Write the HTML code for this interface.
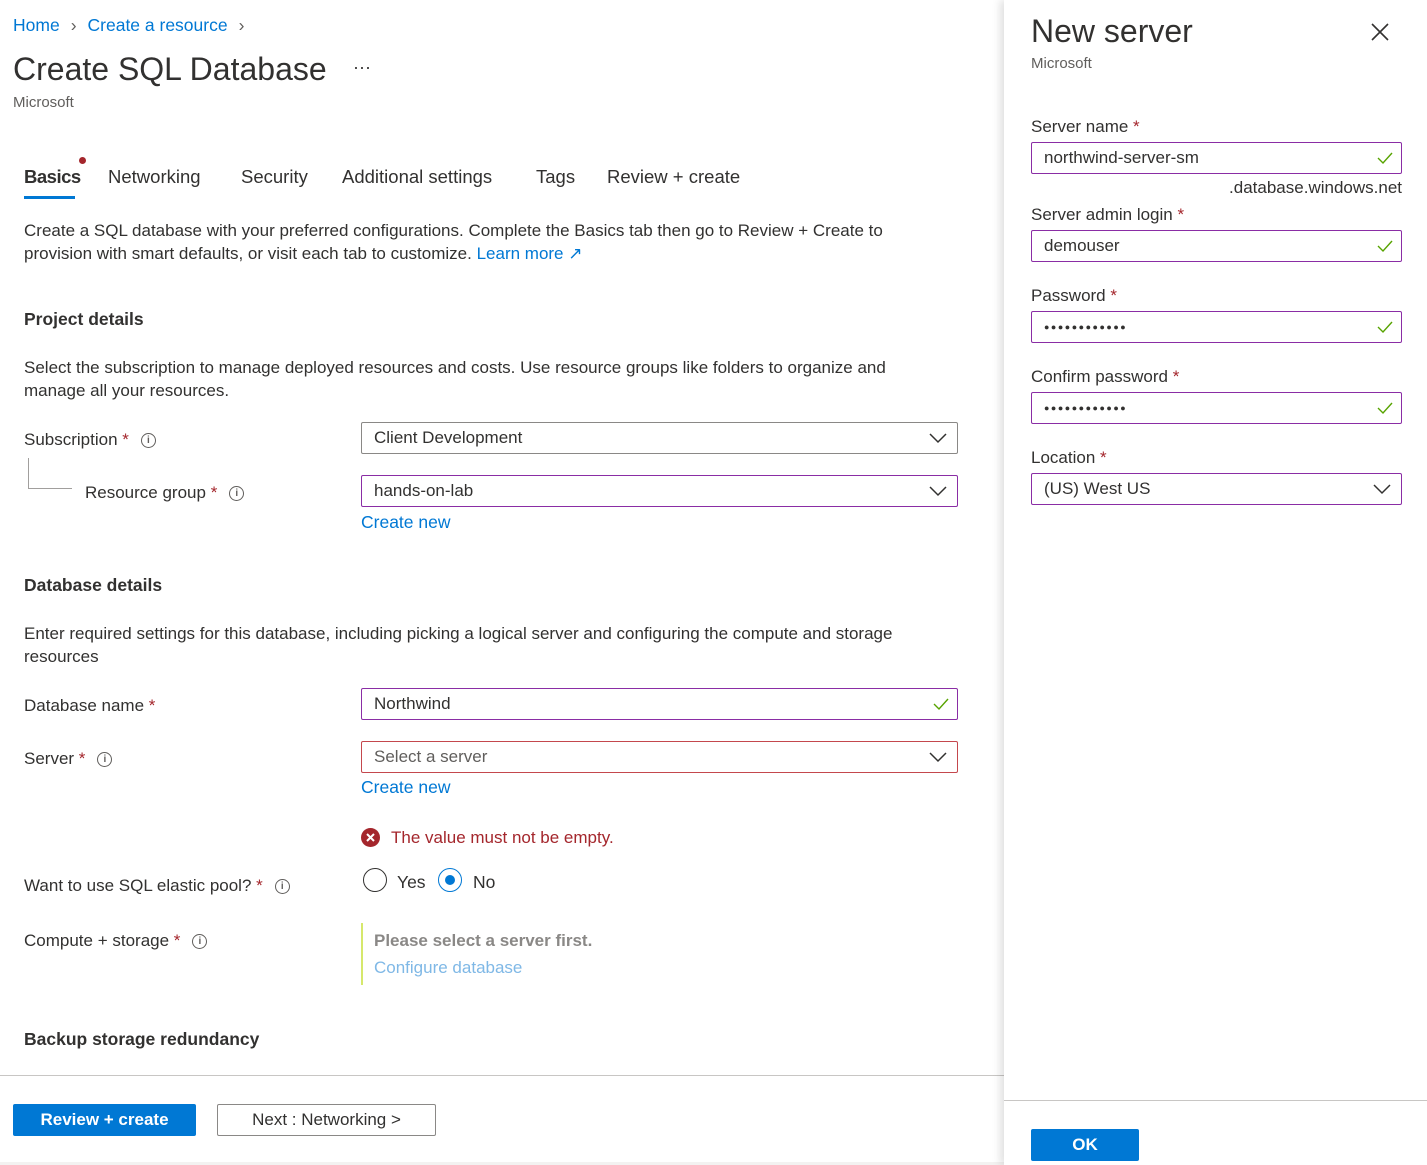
<!DOCTYPE html>
<html><head><meta charset="utf-8"><style>
*{box-sizing:border-box;margin:0;padding:0}
body{width:1427px;height:1165px;position:relative;overflow:hidden;background:#fff;font-family:"Liberation Sans",sans-serif;color:#323130;font-size:17px}
.a{position:absolute;white-space:nowrap}
.link{color:#0078d4}
.req{color:#a4262c}
.box{position:absolute;height:32px;border:1px solid #8a8886;border-radius:2px;padding:0 12px;line-height:30px;font-size:17px}
.pur{border-color:#8a2da5}
.chk{position:absolute;right:8px;top:8px}
.chev{position:absolute;right:10px;top:9px}
.info{display:inline-block;width:15px;height:15px;border:1px solid #605e5c;border-radius:50%;font-size:10px;line-height:13px;text-align:center;color:#605e5c;vertical-align:middle;margin-left:12px;font-weight:bold}
h3{font-size:17.5px;font-weight:bold;position:absolute;color:#323130}
.pw{font-size:9px;letter-spacing:1.5px}
</style></head><body>

<div class="a" style="left:13px;top:15px;font-size:17.5px"><span class="link">Home</span><span style="color:#605e5c;margin:0 11px">&#8250;</span><span class="link">Create a resource</span><span style="color:#605e5c;margin:0 11px">&#8250;</span></div>
<div class="a" style="left:13px;top:51px;font-size:32px;color:#323130">Create SQL Database</div>
<div class="a" style="left:353px;top:57px;font-size:18px">&middot;&middot;&middot;</div>
<div class="a" style="left:13px;top:94px;font-size:15px;color:#605e5c">Microsoft</div>

<div class="a" style="left:24px;top:166px;font-size:18.5px;font-weight:bold;letter-spacing:-0.5px">Basics</div>
<div class="a" style="left:79px;top:157px;width:7px;height:7px;border-radius:50%;background:#a4262c"></div>
<div class="a" style="left:24px;top:196px;width:51px;height:3px;background:#0078d4"></div>
<div class="a" style="left:108px;top:166px;font-size:18.5px">Networking</div>
<div class="a" style="left:241px;top:166px;font-size:18.5px">Security</div>
<div class="a" style="left:342px;top:166px;font-size:18.5px">Additional settings</div>
<div class="a" style="left:536px;top:166px;font-size:18.5px">Tags</div>
<div class="a" style="left:607px;top:166px;font-size:18.5px">Review + create</div>

<div class="a" style="left:24px;top:219px;line-height:23px;font-size:17px">Create a SQL database with your preferred configurations. Complete the Basics tab then go to Review + Create to<br>provision with smart defaults, or visit each tab to customize. <span class="link">Learn more &#8599;</span></div>

<h3 style="left:24px;top:309px">Project details</h3>
<div class="a" style="left:24px;top:356px;line-height:23px;font-size:17px">Select the subscription to manage deployed resources and costs. Use resource groups like folders to organize and<br>manage all your resources.</div>

<div class="a" style="left:24px;top:430px">Subscription <span class="req">*</span><span class="info">i</span></div>
<div class="a" style="left:28px;top:458px;width:44px;height:31px;border-left:1px solid #a19f9d;border-bottom:1px solid #a19f9d"></div>
<div class="a" style="left:85px;top:483px">Resource group <span class="req">*</span><span class="info">i</span></div>
<div class="box" style="left:361px;top:422px;width:597px">Client Development<svg class="chev" width="18" height="12" viewBox="0 0 18 12"><path d="M1 2l8 8 8-8" fill="none" stroke="#323130" stroke-width="1.5"/></svg></div>
<div class="box pur" style="left:361px;top:475px;width:597px">hands-on-lab<svg class="chev" width="18" height="12" viewBox="0 0 18 12"><path d="M1 2l8 8 8-8" fill="none" stroke="#323130" stroke-width="1.5"/></svg></div>
<div class="a link" style="left:361px;top:512px;font-size:17.5px">Create new</div>

<h3 style="left:24px;top:575px">Database details</h3>
<div class="a" style="left:24px;top:622px;line-height:23px;font-size:17px">Enter required settings for this database, including picking a logical server and configuring the compute and storage<br>resources</div>

<div class="a" style="left:24px;top:696px">Database name <span class="req">*</span></div>
<div class="box pur" style="left:361px;top:688px;width:597px">Northwind<svg class="chk" width="16" height="14" viewBox="0 0 16 14"><path d="M1 7l5 5 9-10" fill="none" stroke="#57a300" stroke-width="1.4"/></svg></div>
<div class="a" style="left:24px;top:749px">Server <span class="req">*</span><span class="info">i</span></div>
<div class="box" style="left:361px;top:741px;width:597px;border-color:#c4474d;color:#605e5c">Select a server<svg class="chev" width="18" height="12" viewBox="0 0 18 12"><path d="M1 2l8 8 8-8" fill="none" stroke="#323130" stroke-width="1.5"/></svg></div>
<div class="a link" style="left:361px;top:777px;font-size:17.5px">Create new</div>

<svg class="a" style="left:361px;top:828px" width="19" height="19" viewBox="0 0 19 19"><circle cx="9.5" cy="9.5" r="9.5" fill="#a4262c"/><path d="M6 6l7 7M13 6l-7 7" stroke="#fff" stroke-width="2"/></svg>
<div class="a" style="left:391px;top:828px;color:#a4262c;font-size:17px">The value must not be empty.</div>

<div class="a" style="left:24px;top:876px">Want to use SQL elastic pool? <span class="req">*</span><span class="info">i</span></div>
<div class="a" style="left:363px;top:868px;width:24px;height:24px;border:1.5px solid #323130;border-radius:50%"></div>
<div class="a" style="left:397px;top:872px;font-size:17.5px">Yes</div>
<div class="a" style="left:438px;top:868px;width:24px;height:24px;border:1.5px solid #0078d4;border-radius:50%"></div>
<div class="a" style="left:445px;top:875px;width:10px;height:10px;background:#0078d4;border-radius:50%"></div>
<div class="a" style="left:473px;top:872px;font-size:17.5px">No</div>

<div class="a" style="left:24px;top:931px">Compute + storage <span class="req">*</span><span class="info">i</span></div>
<div class="a" style="left:361px;top:923px;width:2px;height:62px;background:#bad80a;opacity:.6"></div>
<div class="a" style="left:374px;top:931px;font-weight:bold;color:#8a8886;font-size:17px">Please select a server first.</div>
<div class="a" style="left:374px;top:958px;color:#7fb8e6;font-size:17px">Configure database</div>

<h3 style="left:24px;top:1029px">Backup storage redundancy</h3>

<div class="a" style="left:0;top:1075px;width:1004px;height:1px;background:#c8c6c4"></div>
<div class="a" style="left:13px;top:1104px;width:183px;height:32px;background:#0078d4;border-radius:2px;color:#fff;font-weight:bold;text-align:center;line-height:32px;font-size:17px">Review + create</div>
<div class="a" style="left:217px;top:1104px;width:219px;height:32px;border:1px solid #8a8886;border-radius:2px;text-align:center;line-height:30px;font-size:17px">Next : Networking &gt;</div>
<div class="a" style="left:0;top:1162px;width:1004px;height:3px;background:#f3f2f1"></div>

<!-- panel -->
<div class="a" style="left:1004px;top:0;width:423px;height:1165px;background:#fff;box-shadow:-4px 0 8px rgba(0,0,0,.12)"></div>
<div class="a" style="left:1031px;top:13px;font-size:32px">New server</div>
<svg class="a" style="left:1371px;top:23px" width="18" height="18" viewBox="0 0 18 18"><path d="M1 1l16 16M17 1L1 17" stroke="#323130" stroke-width="1.6"/></svg>
<div class="a" style="left:1031px;top:55px;font-size:15px;color:#605e5c">Microsoft</div>

<div class="a" style="left:1031px;top:117px">Server name <span class="req">*</span></div>
<div class="box pur" style="left:1031px;top:142px;width:371px">northwind-server-sm<svg class="chk" width="16" height="14" viewBox="0 0 16 14"><path d="M1 7l5 5 9-10" fill="none" stroke="#57a300" stroke-width="1.4"/></svg></div>
<div class="a" style="right:25px;top:178px">.database.windows.net</div>
<div class="a" style="left:1031px;top:205px">Server admin login <span class="req">*</span></div>
<div class="box pur" style="left:1031px;top:230px;width:371px">demouser<svg class="chk" width="16" height="14" viewBox="0 0 16 14"><path d="M1 7l5 5 9-10" fill="none" stroke="#57a300" stroke-width="1.4"/></svg></div>
<div class="a" style="left:1031px;top:286px">Password <span class="req">*</span></div>
<div class="box pur pw" style="left:1031px;top:311px;width:371px">&#9679;&#9679;&#9679;&#9679;&#9679;&#9679;&#9679;&#9679;&#9679;&#9679;&#9679;&#9679;<svg class="chk" width="16" height="14" viewBox="0 0 16 14"><path d="M1 7l5 5 9-10" fill="none" stroke="#57a300" stroke-width="1.4"/></svg></div>
<div class="a" style="left:1031px;top:367px">Confirm password <span class="req">*</span></div>
<div class="box pur pw" style="left:1031px;top:392px;width:371px">&#9679;&#9679;&#9679;&#9679;&#9679;&#9679;&#9679;&#9679;&#9679;&#9679;&#9679;&#9679;<svg class="chk" width="16" height="14" viewBox="0 0 16 14"><path d="M1 7l5 5 9-10" fill="none" stroke="#57a300" stroke-width="1.4"/></svg></div>
<div class="a" style="left:1031px;top:448px">Location <span class="req">*</span></div>
<div class="box pur" style="left:1031px;top:473px;width:371px">(US) West US<svg class="chev" width="18" height="12" viewBox="0 0 18 12"><path d="M1 2l8 8 8-8" fill="none" stroke="#323130" stroke-width="1.5"/></svg></div>

<div class="a" style="left:1004px;top:1100px;width:423px;height:1px;background:#c8c6c4"></div>
<div class="a" style="left:1031px;top:1129px;width:108px;height:32px;background:#0078d4;border-radius:2px;color:#fff;font-weight:bold;text-align:center;line-height:32px">OK</div>
</body></html>
